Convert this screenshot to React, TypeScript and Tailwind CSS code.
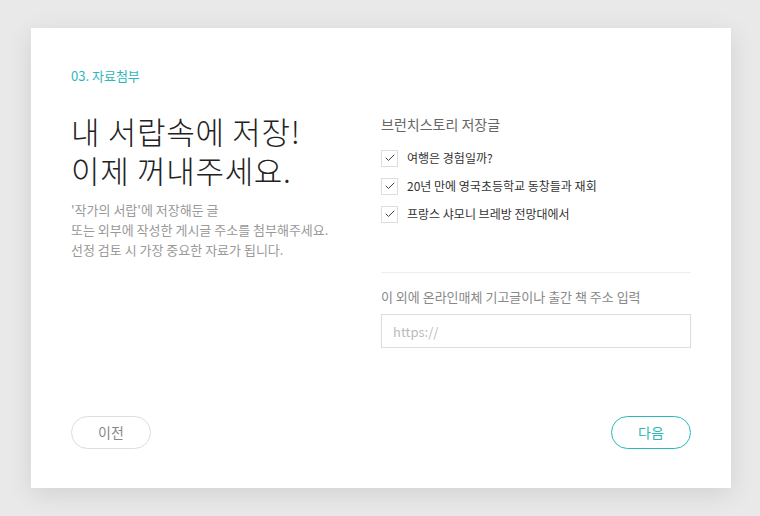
import { Check } from 'lucide-react'

const SAVED = ['여행은 경험일까?', '20년 만에 영국초등학교 동창들과 재회', '프랑스 샤모니 브레방 전망대에서']

export default function App() {
  return (
    <div
      className="w-[760px] h-[516px] bg-[#e9e9e9] pt-[28px] pl-[31px]"
      style={{ fontFamily: '"Noto Sans CJK KR", "Noto Sans", sans-serif' }}
    >
      <div className="w-[700px] h-[460px] bg-white shadow-[0_6px_24px_rgba(0,0,0,0.10)] px-[40px] pt-[38px] flex flex-col">
        <p className="text-[13px] leading-[20px] text-[#2bb8bb]">03. 자료첨부</p>

        <div className="grid grid-cols-2 mt-[24px]">
          {/* Left */}
          <div>
            <h1 className="text-[31px] leading-[39px] font-light text-[#222] tracking-[0.7px] mt-[1px]">
              <span className="block">내 서랍속에 저장!</span>
              <span className="block">이제 꺼내주세요.</span>
            </h1>
            <p className="mt-[11px] text-[13px] leading-[20px] text-[#999]">
              '작가의 서랍'에 저장해둔 글
              <br />
              또는 외부에 작성한 게시글 주소를 첨부해주세요.
              <br />
              선정 검토 시 가장 중요한 자료가 됩니다.
            </p>
          </div>

          {/* Right */}
          <div>
            <p className="text-[14px] leading-[20px] text-[#666] mt-[4px]">브런치스토리 저장글</p>
            <ul className="mt-[15px] flex flex-col gap-[10px]">
              {SAVED.map((t) => (
                <li key={t} className="flex items-center gap-[9px]">
                  <span className="w-[17px] h-[17px] border border-[#ddd] flex items-center justify-center">
                    <Check className="w-[12px] h-[12px] text-[#444]" strokeWidth={2} />
                  </span>
                  <span className="text-[12px] leading-[18px] text-[#333]">{t}</span>
                </li>
              ))}
            </ul>

            <div className="mt-[49px] border-t border-[#eee]" />
            <p className="mt-[15px] text-[13px] leading-[18px] text-[#888]">이 외에 온라인매체 기고글이나 출간 책 주소 입력</p>
            <input
              className="mt-[8px] w-full h-[34px] border border-[#ddd] px-[11px] text-[13px] text-[#333] placeholder:text-[#bbb] outline-none"
              placeholder="https://"
            />
          </div>
        </div>

        <div className="mt-auto mb-[39px] flex justify-between">
          <button className="w-[80px] h-[33px] rounded-full border border-[#ddd] text-[14px] text-[#888]">이전</button>
          <button className="w-[80px] h-[33px] rounded-full border border-[#2bb8bb] text-[14px] text-[#2bb8bb]">다음</button>
        </div>
      </div>
    </div>
  )
}
